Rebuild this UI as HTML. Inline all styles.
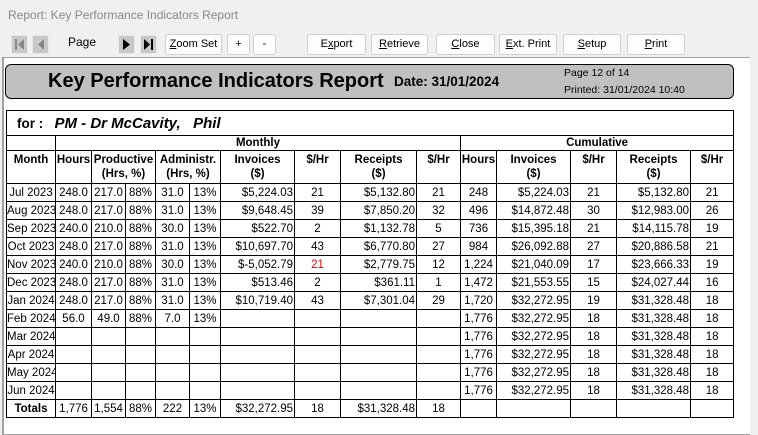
<!DOCTYPE html>
<html><head><style>
body{margin:0;width:758px;height:435px;background:#f0f0f0;font-family:"Liberation Sans",sans-serif;position:relative;overflow:hidden}
.title{position:absolute;left:8px;top:8px;font-size:12px;color:#888}
.btn{position:absolute;top:34px;height:19px;border:1px solid #d0d0d0;border-radius:3px;background:#fdfdfd;font-size:11px;text-align:center;line-height:19px;color:#000}
.nav{position:absolute;top:35px;width:15px;height:17px;background:#c8c8c8;border:1px solid #e8e8e8}
.paper{position:absolute;left:2px;top:57px;width:746px;height:376px;background:#fff;border-left:2px solid #a0a0a0;border-top:1px solid #a0a0a0;border-bottom:1px solid #a0a0a0}
.scroll{position:absolute;left:750px;top:57px;width:8px;height:378px;background:#f0f0f0}
.banner{position:absolute;left:5px;top:64px;width:727px;height:33px;background:#c0c0c0;border:1px solid #000;border-radius:6px}
table{position:absolute;left:6px;top:110px;width:727px;border-collapse:collapse;table-layout:fixed;font-size:11.5px}
td{border:1px solid #000;padding:0;height:17px;text-align:center;white-space:nowrap;overflow:hidden}
.r{text-align:right;padding-right:1px}
th{font-weight:bold;border:1px solid #000;font-size:11.5px;padding:0;white-space:nowrap;overflow:hidden;line-height:14px}
.hd th{padding-top:2px}
.red{color:#e00}
</style></head><body>
<div class="title">Report: Key Performance Indicators Report</div>
<div class="nav" style="left:11px"><svg width="15" height="17"><rect x="3" y="3" width="2" height="11" fill="#888"/><path d="M12 3 L6 8.5 L12 14Z" fill="#888"/></svg></div>
<div class="nav" style="left:32px"><svg width="15" height="17"><path d="M11 3 L5 8.5 L11 14Z" fill="#888"/></svg></div>
<div style="position:absolute;left:68px;top:35px;font-size:12px">Page</div>
<div class="nav" style="left:118px"><svg width="15" height="17"><path d="M4 3 L11 8.5 L4 14Z" fill="#000"/></svg></div>
<div class="nav" style="left:140px"><svg width="15" height="17"><path d="M3 3 L9 8.5 L3 14Z" fill="#000"/><rect x="10" y="3" width="2" height="11" fill="#000"/></svg></div>
<div class="btn" style="left:165px;width:55px"><u>Z</u>oom Set</div>
<div class="btn" style="left:227px;width:21px">+</div>
<div class="btn" style="left:253px;width:21px">-</div>
<div class="btn" style="left:307px;width:57px">E<u>x</u>port</div>
<div class="btn" style="left:371px;width:55px"><u>R</u>etrieve</div>
<div class="btn" style="left:436px;width:57px"><u>C</u>lose</div>
<div class="btn" style="left:499px;width:56px"><u>E</u>xt. Print</div>
<div class="btn" style="left:563px;width:56px"><u>S</u>etup</div>
<div class="btn" style="left:627px;width:56px"><u>P</u>rint</div>
<div class="paper"></div>
<div class="scroll"></div>
<div class="banner"></div>
<div style="position:absolute;left:48px;top:70px;font-size:20px;font-weight:bold">Key Performance Indicators Report</div>
<div style="position:absolute;left:394px;top:74px;font-size:13.5px;font-weight:bold">Date: 31/01/2024</div>
<div style="position:absolute;left:564px;top:67px;font-size:10.5px">Page 12 of 14</div>
<div style="position:absolute;left:564px;top:84px;font-size:10.5px">Printed: 31/01/2024 10:40</div>
<table>
<colgroup><col style="width:49px"><col style="width:36px"><col style="width:34px"><col style="width:30px"><col style="width:34px"><col style="width:31px"><col style="width:74px"><col style="width:46px"><col style="width:76px"><col style="width:44px"><col style="width:36px"><col style="width:74px"><col style="width:46px"><col style="width:74px"><col style="width:43px"></colgroup>
<tr><td colspan="15" style="height:24px;text-align:left;padding-left:10px;font-size:13.5px;font-weight:bold">for : &nbsp;&nbsp;<i style="font-size:15px">PM - Dr McCavity, &nbsp;&nbsp;Phil</i></td></tr>
<tr><th style="height:13px"></th><th colspan="9">Monthly</th><th colspan="5">Cumulative</th></tr>
<tr class="hd" style="height:33px;vertical-align:top"><th>Month</th><th>Hours</th><th colspan="2">Productive<br>(Hrs, %)</th><th colspan="2">Administr.<br>(Hrs, %)</th><th>Invoices<br>($)</th><th>$/Hr</th><th>Receipts<br>($)</th><th>$/Hr</th><th>Hours</th><th>Invoices<br>($)</th><th>$/Hr</th><th>Receipts<br>($)</th><th>$/Hr</th></tr>
<tr><td>Jul 2023</td><td>248.0</td><td>217.0</td><td>88%</td><td>31.0</td><td>13%</td><td class="r">$5,224.03</td><td>21</td><td class="r">$5,132.80</td><td>21</td><td>248</td><td class="r">$5,224.03</td><td>21</td><td class="r">$5,132.80</td><td>21</td></tr>
<tr><td>Aug 2023</td><td>248.0</td><td>217.0</td><td>88%</td><td>31.0</td><td>13%</td><td class="r">$9,648.45</td><td>39</td><td class="r">$7,850.20</td><td>32</td><td>496</td><td class="r">$14,872.48</td><td>30</td><td class="r">$12,983.00</td><td>26</td></tr>
<tr><td>Sep 2023</td><td>240.0</td><td>210.0</td><td>88%</td><td>30.0</td><td>13%</td><td class="r">$522.70</td><td>2</td><td class="r">$1,132.78</td><td>5</td><td>736</td><td class="r">$15,395.18</td><td>21</td><td class="r">$14,115.78</td><td>19</td></tr>
<tr><td>Oct 2023</td><td>248.0</td><td>217.0</td><td>88%</td><td>31.0</td><td>13%</td><td class="r">$10,697.70</td><td>43</td><td class="r">$6,770.80</td><td>27</td><td>984</td><td class="r">$26,092.88</td><td>27</td><td class="r">$20,886.58</td><td>21</td></tr>
<tr><td>Nov 2023</td><td>240.0</td><td>210.0</td><td>88%</td><td>30.0</td><td>13%</td><td class="r">$-5,052.79</td><td class="red">21</td><td class="r">$2,779.75</td><td>12</td><td>1,224</td><td class="r">$21,040.09</td><td>17</td><td class="r">$23,666.33</td><td>19</td></tr>
<tr><td>Dec 2023</td><td>248.0</td><td>217.0</td><td>88%</td><td>31.0</td><td>13%</td><td class="r">$513.46</td><td>2</td><td class="r">$361.11</td><td>1</td><td>1,472</td><td class="r">$21,553.55</td><td>15</td><td class="r">$24,027.44</td><td>16</td></tr>
<tr><td>Jan 2024</td><td>248.0</td><td>217.0</td><td>88%</td><td>31.0</td><td>13%</td><td class="r">$10,719.40</td><td>43</td><td class="r">$7,301.04</td><td>29</td><td>1,720</td><td class="r">$32,272.95</td><td>19</td><td class="r">$31,328.48</td><td>18</td></tr>
<tr><td>Feb 2024</td><td>56.0</td><td>49.0</td><td>88%</td><td>7.0</td><td>13%</td><td></td><td></td><td></td><td></td><td>1,776</td><td class="r">$32,272.95</td><td>18</td><td class="r">$31,328.48</td><td>18</td></tr>
<tr><td>Mar 2024</td><td></td><td></td><td></td><td></td><td></td><td></td><td></td><td></td><td></td><td>1,776</td><td class="r">$32,272.95</td><td>18</td><td class="r">$31,328.48</td><td>18</td></tr>
<tr><td>Apr 2024</td><td></td><td></td><td></td><td></td><td></td><td></td><td></td><td></td><td></td><td>1,776</td><td class="r">$32,272.95</td><td>18</td><td class="r">$31,328.48</td><td>18</td></tr>
<tr><td>May 2024</td><td></td><td></td><td></td><td></td><td></td><td></td><td></td><td></td><td></td><td>1,776</td><td class="r">$32,272.95</td><td>18</td><td class="r">$31,328.48</td><td>18</td></tr>
<tr><td>Jun 2024</td><td></td><td></td><td></td><td></td><td></td><td></td><td></td><td></td><td></td><td>1,776</td><td class="r">$32,272.95</td><td>18</td><td class="r">$31,328.48</td><td>18</td></tr>
<tr><td style="font-weight:bold">Totals</td><td>1,776</td><td>1,554</td><td>88%</td><td>222</td><td>13%</td><td class="r">$32,272.95</td><td>18</td><td class="r">$31,328.48</td><td>18</td><td></td><td></td><td></td><td></td><td></td></tr>
</table>
</body></html>
